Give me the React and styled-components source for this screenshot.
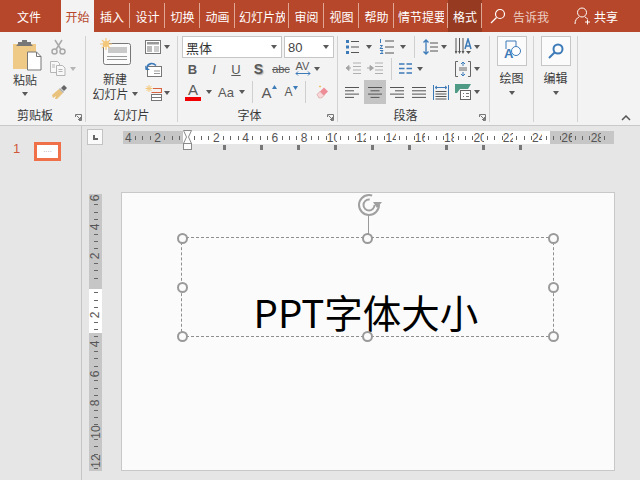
import React from 'react';
import styled, { createGlobalStyle } from 'styled-components';

const GlobalStyle = createGlobalStyle`
  html, body { margin: 0; padding: 0; background: #e6e6e6; }
  body { font-family: "Noto Sans CJK SC", "Liberation Sans", sans-serif; }
`;

const Page = styled.div`
  width: 640px;
  height: 480px;
  overflow: hidden;
  display: flex;
  flex-direction: column;
`;

/* ---------- tab bar ---------- */
const TabBar = styled.div`
  height: 32px;
  flex: none;
  display: flex;
  background: #b7472a;
  color: #fff;
  font-size: 12px;
`;

const Tab = styled.div`
  position: relative;
  width: ${p => p.$w}px;
  flex: none;
  display: flex;
  align-items: center;
  justify-content: ${p => (p.$clip ? 'flex-start' : 'center')};
  padding-left: ${p => (p.$clip ? 4 : 0)}px;
  padding-right: ${p => p.$nudge || 0}px;
  box-sizing: border-box;
  background: ${p => (p.$active ? '#f3f3f3' : p.$context ? '#963a21' : 'transparent')};
  color: ${p => (p.$active ? '#b7472a' : '#fff')};
  &::after {
    content: '';
    display: ${p => (p.$bare ? 'none' : 'block')};
    position: absolute;
    right: 0;
    top: 3px;
    bottom: 4px;
    width: 1px;
    background: #e0a794;
  }
`;

const ClipText = styled.span`
  display: block;
  width: 46px;
  overflow: hidden;
  white-space: nowrap;
`;

const TellMe = styled.div`
  display: flex;
  align-items: center;
  margin-left: 8px;
  width: 72px;
  gap: 7px;
  color: #eccfc5;
`;

const Share = styled.div`
  display: flex;
  align-items: center;
  gap: 3px;
  margin-left: 12px;
`;

/* ---------- ribbon ---------- */
const Ribbon = styled.div`
  height: 94px;
  flex: none;
  box-sizing: border-box;
  padding-top: 4px;
  display: flex;
  position: relative;
  background: #f3f3f3;
  border-bottom: 1px solid #c9c9c9;
  color: #3a3a3a;
  font-size: 12px;
`;

const Group = styled.div`
  position: relative;
  width: ${p => p.$w}px;
  height: 86px;
  flex: none;
  box-sizing: border-box;
  border-right: 1px solid #d2d2d2;
  display: flex;
  flex-direction: column;
`;

const GroupBody = styled.div`
  height: 70px;
  flex: none;
  display: flex;
`;

const GroupLabel = styled.div`
  flex: 1;
  display: flex;
  align-items: flex-start;
  justify-content: center;
  padding-right: ${p => p.$shift || 0}px;
  line-height: 15px;
  margin-top: 1px;
`;

const Launcher = styled.svg`
  position: absolute;
  right: 3px;
  bottom: 1px;
  width: 7px;
  height: 7px;
`;

const BigCol = styled.div`
  width: ${p => p.$w}px;
  flex: none;
  display: flex;
  flex-direction: column;
  align-items: center;
  padding-top: ${p => p.$top || 0}px;
  box-sizing: border-box;
`;

const BigLabel = styled.div`
  line-height: 15px;
  margin-top: ${p => p.$top || 0}px;
  white-space: nowrap;
  display: flex;
  align-items: center;
  gap: 3px;
`;

const PasteArt = styled.div`
  margin-left: 4px;
  height: 32px;
`;

const Stack = styled.div`
  display: flex;
  flex-direction: column;
  width: ${p => p.$w}px;
  margin-left: ${p => p.$left || 0}px;
  flex: none;
`;

const Row = styled.div`
  height: ${p => p.$h}px;
  flex: none;
  display: flex;
  align-items: center;
  padding-left: ${p => p.$pad || 0}px;
`;

const Slot = styled.div`
  width: ${p => p.$w}px;
  height: 100%;
  flex: none;
  display: flex;
  align-items: center;
  justify-content: center;
  background: ${p => (p.$on ? '#c4c4c4' : 'transparent')};
  & > svg { flex: none; }
`;

const Caret = styled.i`
  display: block;
  flex: none;
  width: 0;
  height: 0;
  margin-top: ${p => p.$top || 0}px;
  border-left: 3.5px solid transparent;
  border-right: 3.5px solid transparent;
  border-top: 4px solid ${p => (p.$light ? '#b5b5b5' : '#595959')};
`;

const VSep = styled.i`
  display: block;
  width: 1px;
  height: 22px;
  flex: none;
  background: #cfcfcf;
`;

const Combo = styled.div`
  width: ${p => p.$w}px;
  height: 22px;
  margin-left: ${p => p.$left || 0}px;
  flex: none;
  box-sizing: border-box;
  display: flex;
  align-items: center;
  justify-content: space-between;
  padding: 0 4px 0 3px;
  background: #fff;
  border: 1px solid #c6c6c6;
  font-family: ${p => (p.$latin ? '"Liberation Sans", sans-serif' : '"Noto Sans CJK SC", sans-serif')};
  font-size: 13px;
  color: ${p => (p.$latin ? '#444' : '#333')};
`;

const Glyph = styled.span`
  font-family: "Liberation Sans", sans-serif;
  font-size: ${p => p.$size || 13}px;
  font-weight: ${p => (p.$bold ? 700 : 400)};
  font-style: ${p => (p.$italic ? 'italic' : 'normal')};
  text-decoration: ${p => p.$line || 'none'};
  text-shadow: ${p => (p.$shadow ? '1px 1px 1px #aaa' : 'none')};
  color: ${p => p.$color || '#595959'};
  line-height: 1;
`;

const GrowWrap = styled.span`
  display: flex;
  align-items: flex-start;
`;

const ColorA = styled.span`
  display: flex;
  flex-direction: column;
  align-items: center;
  font-family: "Liberation Sans", sans-serif;
  font-size: 15px;
  line-height: 14px;
  color: #595959;
  &::after {
    content: '';
    display: block;
    width: 16px;
    height: 4px;
    background: #f00000;
  }
`;

const StackedGlyph = styled.span`
  display: flex;
  flex-direction: column;
  align-items: center;
  font-family: "Liberation Sans", sans-serif;
  font-size: 11px;
  line-height: 9px;
  color: #595959;
`;

const ToolBox = styled.div`
  width: 30px;
  height: 30px;
  flex: none;
  box-sizing: border-box;
  border: 1px solid #c6c6c6;
  background: #fbfbfb;
  display: flex;
  align-items: center;
  justify-content: center;
  margin-bottom: 4px;
`;

const Collapse = styled.svg`
  position: absolute;
  right: 9px;
  bottom: 4px;
  width: 10px;
  height: 6px;
`;

/* ---------- workspace ---------- */
const Workspace = styled.div`
  flex: 1;
  display: flex;
  min-height: 0;
  background: #e6e6e6;
`;

const SlidePanel = styled.div`
  width: 82px;
  flex: none;
  box-sizing: border-box;
  border-right: 1px solid #c6c6c6;
  display: flex;
  align-items: flex-start;
  padding: 16px 0 0 13px;
  gap: 14px;
`;

const SlideNumber = styled.div`
  font-family: "Liberation Sans", sans-serif;
  font-size: 13px;
  line-height: 14px;
  color: #d0583a;
`;

const Thumb = styled.div`
  width: 27px;
  height: 19px;
  box-sizing: border-box;
  border: 3px solid #f0704a;
  background: #fff;
  display: flex;
  align-items: center;
  justify-content: center;
  font-family: "Liberation Sans", sans-serif;
  font-size: 5px;
  line-height: 1;
  letter-spacing: 0.5px;
  color: #222;
`;

const Editor = styled.div`
  flex: 1;
  min-width: 0;
  display: flex;
  flex-direction: column;
  padding-left: 5px;
`;

const TopRow = styled.div`
  height: 66px;
  flex: none;
  display: flex;
  align-items: flex-start;
  padding-top: 3px;
  box-sizing: border-box;
`;

const Corner = styled.div`
  width: 16px;
  height: 16px;
  flex: none;
  box-sizing: border-box;
  border: 1px solid #c3c3c3;
  background: #fafafa;
  margin-right: 20px;
  display: flex;
  align-items: center;
  justify-content: center;
  &::before {
    content: '';
    display: block;
    width: 5px;
    height: 5px;
    border-left: 2px solid #666;
    border-bottom: 2px solid #666;
    box-sizing: border-box;
  }
`;

const HRulerWrap = styled.div`
  position: relative;
  width: 491px;
  margin-top: 2px;
`;

const HRulerBar = styled.div`
  height: 13px;
  display: flex;
  padding-left: 1.67px;
  box-sizing: border-box;
  background: #c6c6c6;
`;

const RulerCell = styled.div`
  width: 7.333px;
  height: 13px;
  flex: none;
  display: flex;
  align-items: center;
  justify-content: center;
  background: ${p => (p.$shade ? '#c6c6c6' : '#fff')};
  font-family: "Liberation Sans", sans-serif;
  font-size: 12px;
  color: #555;
  white-space: nowrap;
  &::before {
    content: '';
    display: ${p => (p.$tick ? 'block' : 'none')};
    width: 1px;
    height: 4px;
    background: #666;
  }
`;

const TabStops = styled.div`
  display: flex;
  gap: 34px;
  padding: 1px 0 0 100px;
`;

const TabStop = styled.i`
  display: block;
  width: 3px;
  height: 5px;
  background: #777;
`;

const IndentMarker = styled.svg`
  position: absolute;
  left: 60px;
  top: -1px;
  width: 9px;
  height: 20px;
`;

const BodyRow = styled.div`
  display: flex;
  align-items: flex-start;
`;

const VRuler = styled.div`
  width: 13px;
  height: 277px;
  margin: 2px 19px 0 2px;
  flex: none;
  display: flex;
  flex-direction: column;
  overflow: hidden;
  background: #c6c6c6;
`;

const VCell = styled.div`
  width: 13px;
  height: 7.333px;
  flex: none;
  display: flex;
  align-items: center;
  justify-content: center;
  background: ${p => (p.$shade ? '#c6c6c6' : '#fff')};
  font-family: "Liberation Sans", sans-serif;
  font-size: 12px;
  color: #555;
  white-space: nowrap;
  &::before {
    content: '';
    display: ${p => (p.$tick ? 'block' : 'none')};
    width: 4px;
    height: 1px;
    background: #666;
  }
  & > span { display: block; transform: rotate(-90deg); }
`;

const Slide = styled.div`
  width: 494px;
  height: 279px;
  flex: none;
  box-sizing: border-box;
  border: 1px solid #c8c8c8;
  background: #fbfbfb;
  padding: 44px 0 0 59px;
`;

const TextFrame = styled.div`
  position: relative;
  width: 373px;
  height: 100px;
  box-sizing: border-box;
  border: 1px dashed #8f8f8f;
  display: flex;
  align-items: flex-end;
  justify-content: center;
`;

const FrameText = styled.div`
  font-family: "Noto Sans CJK SC", sans-serif;
  font-size: 38.5px;
  line-height: 54px;
  color: #000;
  white-space: nowrap;
  margin: 0 3px -2px 0;
`;

const Handle = styled.i`
  position: absolute;
  left: ${p => p.$x}%;
  top: ${p => p.$y}%;
  width: 11px;
  height: 11px;
  box-sizing: border-box;
  margin: -5.5px 0 0 -5.5px;
  border: 2px solid #9a9a9a;
  border-radius: 50%;
  background: #fbfbfb;
`;

const RotateStem = styled.i`
  position: absolute;
  left: 50%;
  top: -23px;
  width: 1px;
  height: 23px;
  background: #9a9a9a;
`;

const RotateIcon = styled.svg`
  position: absolute;
  left: 175px;
  top: -45px;
  width: 26px;
  height: 24px;
`;

/* ---------- drawings ---------- */
const Svg = ({ w, h, children }) => <svg width={w} height={h} viewBox={`0 0 ${w} ${h}`}>{children}</svg>;

const PasteIcon = () => (
  <Svg w={30} h={32}>
    <rect x="1" y="5" width="23" height="25" fill="#efc986" />
    <path d="M6 5V3h4V1h5v2h4v2l2 2H4z" fill="#777" />
    <path d="M15.500 13h9l4.500 4.500V31h-13.500z" fill="#fff" stroke="#777" />
    <path d="M24.500 13v4.500H29" fill="none" stroke="#777" />
  </Svg>
);
const ScissorsIcon = () => (
  <Svg w={15} h={16}>
    <g fill="none" stroke="#a9a9a9" strokeWidth="1.500">
      <circle cx="3.500" cy="12.500" r="2.500" />
      <circle cx="11.500" cy="12.500" r="2.500" />
      <path d="M5 10.500 11 1M10 10.500 4 1" />
    </g>
  </Svg>
);
const CopyIcon = () => (
  <Svg w={16} h={15}>
    <g fill="#f8f8f8" stroke="#b5b5b5">
      <path d="M.5.500h7l2 2v9h-9z" />
      <path d="M6.500 4.500h6l2.500 2.500v7.500H6.500z" />
      <path d="M8.500 8.500h4M8.500 10.500h4M2 4h3M2 6h3" fill="none" />
    </g>
  </Svg>
);
const BrushIcon = () => (
  <Svg w={17} h={16}>
    <path d="M1 11 8 5l4 4-6 6H4l1-3-3 2z" fill="#e9c27d" />
    <path d="M8 5l4 4 1-1-4-4z" fill="#aaa" />
    <path d="M10 4l3-3 3 3-3 3z" fill="#666" />
  </Svg>
);
const NewSlideIcon = () => (
  <Svg w={31} h={28}>
    <rect x="3.500" y="5.500" width="27" height="21" rx="2" fill="#fbfbfb" stroke="#777" />
    <rect x="8" y="9" width="19" height="6" fill="#c9c9c9" />
    <path d="M7 18.500h20M7 21.500h20" stroke="#999" />
    <circle cx="6" cy="6" r="3" fill="#f4c87a" />
    <path d="M6 0v12M0 6h12M2 2l8 8M10 2l-8 8" stroke="#f4c87a" strokeWidth="1.200" />
  </Svg>
);
const LayoutIcon = () => (
  <Svg w={16} h={14}>
    <rect x=".5" y=".5" width="15" height="13" fill="#fff" stroke="#777" />
    <rect x="2" y="2" width="12" height="2.500" fill="#999" />
    <rect x="2" y="6" width="5" height="6" fill="#bbb" />
    <path d="M9 7h5M9 9h5M9 11h5" stroke="#999" />
  </Svg>
);
const ResetIcon = () => (
  <Svg w={17} h={15}>
    <rect x="2.500" y="4.500" width="14" height="10" fill="#fff" stroke="#777" />
    <path d="M9 9h6M9 11.500h6" stroke="#999" />
    <path d="M11 3.500C8 .5 3.500 1 2 5" fill="none" stroke="#3d7ab8" strokeWidth="1.600" />
    <path d="M0 3.500 5 8 .5 8z" fill="#3d7ab8" />
  </Svg>
);
const SectionIcon = () => (
  <Svg w={17} h={16}>
    <path d="M4 0v7M.5 3.500h7M1.500 1l5 5M6.500 1l-5 5" stroke="#f4c87a" />
    <path d="M8 3.500h8.500v4H6.500" fill="none" stroke="#d8643f" strokeWidth="1.200" />
    <rect x="6.500" y="9.500" width="10" height="6" fill="#fff" stroke="#777" />
    <path d="M6.500 12.500h10" stroke="#777" />
  </Svg>
);
const GrowIcon = ({ down }) => (
  <GrowWrap>
    <Glyph $size={down ? 12 : 15}>A</Glyph>
    <svg width="5" height="4" viewBox="0 0 5 4"><path d={down ? 'M0 0h5L2.500 4z' : 'M0 4h5L2.500 0z'} fill="#3d7ab8" /></svg>
  </GrowWrap>
);
const EraserIcon = () => (
  <Svg w={15} h={15}>
    <path d="M2 9.500 9 2.500l4 4-6.500 6.500H4z" fill="#ee8c98" />
    <path d="M2 9.500 5 6.500l4 4-2.500 2.500H4z" fill="#f9d7db" stroke="#c98" strokeWidth=".5" />
    <path d="M4 1.500h2M5 .5v2" stroke="#f0c070" />
  </Svg>
);
const BulletsIcon = () => (
  <Svg w={14} h={14}>
    <path d="M1 0h3v3H1zM1 5.500h3v3H1zM1 11h3v3H1z" fill="#3d7ab8" />
    <path d="M6 1.500h8M6 7h8M6 12.500h8" stroke="#555" />
  </Svg>
);
const NumbersIcon = () => (
  <Svg w={15} h={16}>
    <path d="M1.500 0v4M1 6.500h2.500L1 9.500h3M1 11.500h3l-1.500 1.500 1.500 1.500H1" fill="none" stroke="#3d7ab8" />
    <path d="M6 2h9M6 8h9M6 14h9" stroke="#555" />
  </Svg>
);
const LineSpacingIcon = () => (
  <Svg w={15} h={16}>
    <path d="M3 1v14M.5 3.500 3 1l2.500 2.500M.5 12.500 3 15l2.500-2.500" fill="none" stroke="#3d7ab8" strokeWidth="1.300" />
    <path d="M7 4h8M7 8h8M7 12h8" stroke="#555" />
  </Svg>
);
const DirectionIcon = () => (
  <Svg w={17} h={18}>
    <path d="M1 0v13M4.500 0v13M8 0v13" stroke="#555" />
    <path d="M-.5 13h3L1 16zM3 13h3l-1.500 3zM6.500 13h3L8 16z" fill="#555" />
    <path d="M10 11 13 1l3 10M11 8h4.500" fill="none" stroke="#3d7ab8" strokeWidth="1.500" />
    <path d="M11 13h5l-2.500 3z" fill="#555" />
  </Svg>
);
const IndentIcon = ({ out }) => (
  <Svg w={16} h={13}>
    <path d="M8 1h8M8 4.500h8M8 8h8M8 11.500h8" stroke="#b0b0b0" />
    <path d={out ? 'M6 6H2M4 3.500 1 6l3 2.500z' : 'M0 6h4M3 3.500 6.500 6 3 8.500z'} fill="#a5a5a5" stroke="#a5a5a5" />
  </Svg>
);
const ColumnsIcon = () => (
  <Svg w={13} h={11}>
    <path d="M0 1h5.500M7.500 1H13M0 5.500h5.500M7.500 5.500H13M0 10h5.500M7.500 10H13" stroke="#3d7ab8" strokeWidth="1.300" />
  </Svg>
);
const ValignIcon = () => (
  <Svg w={16} h={16}>
    <path d="M3 .5H.5v15H3M13 .5h2.500v15H13" fill="none" stroke="#666" />
    <path d="M8 1v4M6 3l2-2 2 2M8 15v-4M6 13l2 2 2-2" fill="none" stroke="#3d7ab8" />
    <path d="M4 7h8M4 9h8" stroke="#666" />
  </Svg>
);
const Lines = ({ kind }) => {
  const rows = {
    left: [[0, 14], [0, 9], [0, 14], [0, 9]],
    center: [[0, 14], [2.5, 9], [0, 14], [2.5, 9]],
    right: [[0, 14], [5, 9], [0, 14], [5, 9]],
    just: [[0, 14], [0, 14], [0, 14], [0, 14]],
  }[kind];
  return (
    <Svg w={14} h={11}>
      {rows.map(([x, l], i) => <path key={i} d={`M${x} ${i * 3.3 + 0.5}h${l}`} stroke="#555" />)}
    </Svg>
  );
};
const DistributeIcon = () => (
  <Svg w={16} h={15}>
    <path d="M.5 0v15M15.500 0v15" stroke="#3d7ab8" />
    <path d="M2.500 2.500h11M4 1l-2 1.500L4 4M12 1l2 1.500L12 4" fill="none" stroke="#3d7ab8" />
    <path d="M2.500 6.500h11M2.500 9h11M2.500 11.500h11M2.500 14h11" stroke="#555" />
  </Svg>
);
const SmartArtIcon = () => (
  <Svg w={16} h={16}>
    <path d="M0 0h16L13 5H5L2 9H0z" fill="#4f9a84" />
    <rect x="5.500" y="6.500" width="10" height="9" fill="#fff" stroke="#666" />
    <path d="M8 9.500h1M11 9.500h3M8 12.500h1M11 12.500h3" stroke="#777" />
  </Svg>
);
const ShapesIcon = () => (
  <Svg w={18} h={22}>
    <path d="M3 9V1h10v5" fill="none" stroke="#3d7ab8" />
    <circle cx="13" cy="11" r="4.500" fill="#fff" stroke="#3d7ab8" />
    <text x="1" y="18" fontFamily="Liberation Sans" fontWeight="700" fontSize="13" fill="#3d7ab8">A</text>
  </Svg>
);
const SearchIcon = ({ color = '#3d7ab8', sw = 2 }) => (
  <Svg w={16} h={16}>
    <circle cx="10" cy="6" r="4.500" fill="none" stroke={color} strokeWidth={sw} />
    <path d="M6.500 9.500 1 15" stroke={color} strokeWidth={sw} />
  </Svg>
);
const UserIcon = () => (
  <Svg w={17} h={18}>
    <circle cx="8" cy="5.500" r="4.500" fill="none" stroke="#fff" />
    <path d="M1 17c0-4 2-6 4-7M11 10c1 .5 2 1 2.500 2" fill="none" stroke="#fff" />
    <path d="M13.500 12.500v5M11 15h5" stroke="#fff" />
  </Svg>
);
const LauncherIcon = () => (
  <Launcher viewBox="0 0 7 7">
    <path d="M.5 3V.5H6.500V6.500H4" fill="none" stroke="#777" />
    <path d="M1.500 1.500 5.500 5.500M5.500 3v2.500H3" fill="none" stroke="#777" />
  </Launcher>
);

/* ---------- data ---------- */
const tabs = [
  { label: '文件', w: 61, bare: true, nudge: 3 },
  { label: '开始', w: 33, active: true, bare: true },
  { label: '插入', w: 36 },
  { label: '设计', w: 35 },
  { label: '切换', w: 35 },
  { label: '动画', w: 35 },
  { label: '幻灯片放', w: 54, clip: true },
  { label: '审阅', w: 35 },
  { label: '视图', w: 35 },
  { label: '帮助', w: 35 },
  { label: '情节提要', w: 54, clip: true },
  { label: '格式', w: 34, context: true },
];

const hCells = [];
for (let v = -4; v <= 28.5; v += 0.5) hCells.push(v);
const vCells = [];
for (let v = -6; v <= 12.5; v += 0.5) vCells.push(v);

const RulerNumbers = ({ cells, shadeFn, Cell, rotate }) => cells.map(v => {
  const isNum = v % 2 === 0 && v !== 0;
  const label = Math.abs(v);
  return (
    <Cell key={v} $shade={shadeFn(v)} $tick={!isNum && v !== 0}>
      {isNum ? (rotate ? <span>{label}</span> : label) : null}
    </Cell>
  );
});

const App = () => (
  <Page>
    <GlobalStyle />
    <TabBar>
      {tabs.map(t => (
        <Tab key={t.label} $w={t.w} $active={t.active} $context={t.context} $clip={t.clip} $bare={t.bare} $nudge={t.nudge}>
          {t.clip ? <ClipText>{t.label}</ClipText> : t.label}
        </Tab>
      ))}
      <TellMe>
        <SearchIcon color="#fff" sw={1.2} />
        告诉我
      </TellMe>
      <Share>
        <UserIcon />
        共享
      </Share>
    </TabBar>

    <Ribbon>
      <Group $w={86}>
        <GroupBody>
          <BigCol $w={50} $top={3}>
            <PasteArt><PasteIcon /></PasteArt>
            <BigLabel $top={1}>粘贴</BigLabel>
            <Caret $top={5} />
          </BigCol>
          <Stack $w={30}>
            <Row $h={21}><Slot $w={16}><ScissorsIcon /></Slot></Row>
            <Row $h={23}><Slot $w={16}><CopyIcon /></Slot><Slot $w={14}><Caret $light /></Slot></Row>
            <Row $h={24}><Slot $w={18}><BrushIcon /></Slot></Row>
          </Stack>
        </GroupBody>
        <GroupLabel $shift={15}>剪贴板</GroupLabel>
        <LauncherIcon />
      </Group>

      <Group $w={92}>
        <GroupBody>
          <BigCol $w={58} $top={2}>
            <NewSlideIcon />
            <BigLabel $top={5}>新建</BigLabel>
            <BigLabel>幻灯片<Caret /></BigLabel>
          </BigCol>
          <Stack $w={32}>
            <Row $h={21}><Slot $w={18}><LayoutIcon /></Slot><Slot $w={10}><Caret /></Slot></Row>
            <Row $h={24}><Slot $w={18}><ResetIcon /></Slot></Row>
            <Row $h={23}><Slot $w={18}><SectionIcon /></Slot><Slot $w={10}><Caret /></Slot></Row>
          </Stack>
        </GroupBody>
        <GroupLabel>幻灯片</GroupLabel>
      </Group>

      <Group $w={160}>
        <GroupBody>
          <Stack $w={156} $left={4}>
            <Row $h={22}>
              <Combo $w={100}>黑体<Caret /></Combo>
              <Combo $w={50} $latin $left={2}>80<Caret /></Combo>
            </Row>
            <Row $h={22}>
              <Slot $w={21}><Glyph $bold $size={13}>B</Glyph></Slot>
              <Slot $w={22}><Glyph $italic $size={13}>I</Glyph></Slot>
              <Slot $w={22}><Glyph $line="underline" $size={13}>U</Glyph></Slot>
              <Slot $w={23}><Glyph $bold $shadow $size={14}>S</Glyph></Slot>
              <Slot $w={22}><Glyph $line="line-through" $size={11}>abc</Glyph></Slot>
              <Slot $w={21}>
                <StackedGlyph>
                  AV
                  <svg width="16" height="5" viewBox="0 0 16 5"><path d="M1 2.500h14M3 .5 1 2.500l2 2M13 .5l2 2-2 2" fill="none" stroke="#3d7ab8" /></svg>
                </StackedGlyph>
              </Slot>
              <Slot $w={7}><Caret /></Slot>
            </Row>
            <Row $h={24}>
              <Slot $w={22}><ColorA>A</ColorA></Slot>
              <Slot $w={10}><Caret /></Slot>
              <Slot $w={24}><Glyph $size={13}>Aa</Glyph></Slot>
              <Slot $w={8}><Caret /></Slot>
              <Slot $w={12}><VSep /></Slot>
              <Slot $w={22}><GrowIcon /></Slot>
              <Slot $w={22}><GrowIcon down /></Slot>
              <Slot $w={7}><VSep /></Slot>
              <Slot $w={26}><EraserIcon /></Slot>
            </Row>
          </Stack>
        </GroupBody>
        <GroupLabel $shift={16}>字体</GroupLabel>
        <LauncherIcon />
      </Group>

      <Group $w={152}>
        <GroupBody>
          <Stack $w={151}>
            <Row $h={21}>
              <Slot $w={28}><BulletsIcon /></Slot>
              <Slot $w={6}><Caret /></Slot>
              <Slot $w={29}><NumbersIcon /></Slot>
              <Slot $w={4}><Caret /></Slot>
              <Slot $w={18}><VSep /></Slot>
              <Slot $w={14}><LineSpacingIcon /></Slot>
              <Slot $w={14}><Caret /></Slot>
              <Slot $w={24}><DirectionIcon /></Slot>
              <Slot $w={4}><Caret /></Slot>
            </Row>
            <Row $h={23}>
              <Slot $w={30}><IndentIcon out /></Slot>
              <Slot $w={14}><IndentIcon /></Slot>
              <Slot $w={18}><VSep /></Slot>
              <Slot $w={10}><ColumnsIcon /></Slot>
              <Slot $w={20}><Caret /></Slot>
              <Slot $w={21} />
              <Slot $w={24}><ValignIcon /></Slot>
              <Slot $w={4}><Caret /></Slot>
            </Row>
            <Row $h={24} $pad={2}>
              <Slot $w={24}><Lines kind="left" /></Slot>
              <Slot $w={22} $on><Lines kind="center" /></Slot>
              <Slot $w={22}><Lines kind="right" /></Slot>
              <Slot $w={22}><Lines kind="just" /></Slot>
              <Slot $w={22}><DistributeIcon /></Slot>
              <Slot $w={22}><SmartArtIcon /></Slot>
              <Slot $w={6}><Caret /></Slot>
            </Row>
          </Stack>
        </GroupBody>
        <GroupLabel $shift={16}>段落</GroupLabel>
        <LauncherIcon />
      </Group>

      <Group $w={44}>
        <GroupBody>
          <BigCol $w={43}>
            <ToolBox><ShapesIcon /></ToolBox>
            <BigLabel>绘图</BigLabel>
            <Caret $top={6} />
          </BigCol>
        </GroupBody>
      </Group>

      <Group $w={44}>
        <GroupBody>
          <BigCol $w={43}>
            <ToolBox><SearchIcon /></ToolBox>
            <BigLabel>编辑</BigLabel>
            <Caret $top={6} />
          </BigCol>
        </GroupBody>
      </Group>

      <Collapse viewBox="0 0 10 6">
        <path d="M1 5 5 1l4 4" fill="none" stroke="#555" strokeWidth="1.500" />
      </Collapse>
    </Ribbon>

    <Workspace>
      <SlidePanel>
        <SlideNumber>1</SlideNumber>
        <Thumb>····</Thumb>
      </SlidePanel>
      <Editor>
        <TopRow>
          <Corner />
          <HRulerWrap>
            <HRulerBar>
              <RulerNumbers cells={hCells} Cell={RulerCell} shadeFn={v => v < 0 || v > 24.5} />
            </HRulerBar>
            <TabStops>
              {[0, 1, 2, 3, 4, 5, 6, 7, 8].map(i => <TabStop key={i} />)}
            </TabStops>
            <IndentMarker viewBox="0 0 9 20">
              <path d="M.5.5h8L5.500 7l3 6.500h-8L3.500 7z" fill="#fbfbfb" stroke="#8a8a8a" />
              <rect x=".5" y="13.500" width="8" height="6" fill="#fbfbfb" stroke="#8a8a8a" />
            </IndentMarker>
          </HRulerWrap>
        </TopRow>
        <BodyRow>
          <VRuler>
            <RulerNumbers rotate cells={vCells} Cell={VCell} shadeFn={v => v <= 0 || v > 3} />
          </VRuler>
          <Slide>
            <TextFrame>
              <FrameText>PPT字体大小</FrameText>
              <RotateStem />
              <RotateIcon viewBox="0 0 26 24">
                <circle cx="12" cy="12" r="10" fill="none" stroke="#a0a0a0" strokeWidth="2" strokeDasharray="50 12" />
                <circle cx="12" cy="12" r="5.500" fill="none" stroke="#a0a0a0" strokeWidth="2" strokeDasharray="26 8" />
                <path d="M16 9h9l-5 6z" fill="#a0a0a0" />
              </RotateIcon>
              <Handle $x={0} $y={0} />
              <Handle $x={50} $y={0} />
              <Handle $x={100} $y={0} />
              <Handle $x={0} $y={50} />
              <Handle $x={100} $y={50} />
              <Handle $x={0} $y={100} />
              <Handle $x={50} $y={100} />
              <Handle $x={100} $y={100} />
            </TextFrame>
          </Slide>
        </BodyRow>
      </Editor>
    </Workspace>
  </Page>
);

export default App;
